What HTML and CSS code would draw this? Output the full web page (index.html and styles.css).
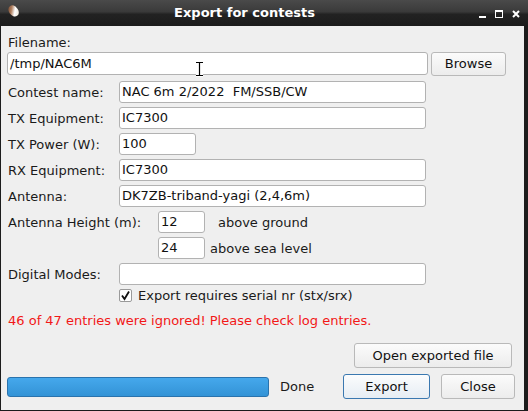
FILE: index.html
```html
<!DOCTYPE html>
<html>
<head>
<meta charset="utf-8">
<link rel="stylesheet" href="styles.css">
</head>
<body>
<div class="window">
  <div class="titlebar">
    <div class="appicon"></div>
    <div class="title">Export for contests</div>
    <div class="controls">
      <span class="ctl-min"></span>
      <span class="ctl-max"></span>
      <svg class="ctl-close" width="8" height="8" viewBox="0 0 8 8"><path d="M1 1L7 7M7 1L1 7" stroke="#fff" stroke-width="2"/></svg>
    </div>
  </div>
  <div class="content">
    <div class="label-top">Filename:</div>
    <div class="file-row">
      <div class="input file-input">/tmp/NAC6M</div>
      <div class="button browse">Browse</div>
    </div>
    <div class="form">
      <div class="row"><span class="lbl">Contest name:</span><div class="input wide">NAC 6m 2/2022&nbsp; FM/SSB/CW</div></div>
      <div class="row"><span class="lbl">TX Equipment:</span><div class="input wide">IC7300</div></div>
      <div class="row"><span class="lbl">TX Power (W):</span><div class="input narrow">100</div></div>
      <div class="row"><span class="lbl">RX Equipment:</span><div class="input wide">IC7300</div></div>
      <div class="row"><span class="lbl">Antenna:</span><div class="input wide">DK7ZB-triband-yagi (2,4,6m)</div></div>
      <div class="row"><span class="lbl lbl-long">Antenna Height (m):</span><div class="input small">12</div><span class="unit unit-ground">above ground</span></div>
      <div class="row"><span class="lbl lbl-long"></span><div class="input small">24</div><span class="unit">above sea level</span></div>
      <div class="row"><span class="lbl">Digital Modes:</span><div class="input wide"></div></div>
      <div class="row check-row"><span class="lbl"></span><span class="checkbox"><svg width="11" height="11" viewBox="0 0 11 11"><path d="M2 5.5L4.5 9L9 1.5" fill="none" stroke="#111" stroke-width="1.8"/></svg></span><span class="check-text">Export requires serial nr (stx/srx)</span></div>
    </div>
    <div class="warning">46 of 47 entries were ignored! Please check log entries.</div>
    <div class="open-row"><div class="button open">Open exported file</div></div>
    <div class="bottom-row">
      <div class="progress"></div>
      <span class="done">Done</span>
      <div class="button export">Export</div>
      <div class="button close">Close</div>
    </div>
  </div>
  <svg class="cursor" width="9" height="16" viewBox="0 0 9 16"><path d="M1 1.5H8M1 14.5H8M4.5 1.5V14.5" stroke="#fff" stroke-width="3"/><path d="M1 1.5H8M1 14.5H8M4.5 1.5V14.5" stroke="#000" stroke-width="1.2"/></svg>
</div>
</body>
</html>
```
FILE: styles.css
```css
html, body {
  margin: 0;
  padding: 0;
  background: #efefef;
}
.window {
  position: relative;
  width: 528px;
  height: 411px;
  overflow: hidden;
  font-family: "DejaVu Sans", sans-serif;
  font-size: 13px;
  color: #1a1a1a;
  display: flex;
  flex-direction: column;
}
.titlebar {
  height: 26px;
  flex: none;
  display: flex;
  align-items: center;
  background: linear-gradient(#4a4a4a 0, #3a3a3a 45%, #222 55%, #1c1c1c 100%);
  color: #fff;
}
.appicon {
  width: 9px;
  height: 12px;
  margin-left: 9px;
  margin-top: -4px;
  border-radius: 50% 50% 45% 55%;
  transform: rotate(-35deg);
  background: linear-gradient(135deg, #6a3b22 0, #b08060 35%, #fff 60%, #e8dcc8 100%);
}
.title {
  flex: 1;
  text-align: center;
  font-weight: bold;
  font-size: 13px;
  padding-right: 8px;
  margin-top: -1px;
}
.controls {
  display: flex;
  align-items: center;
  gap: 9px;
  margin-right: 8px;
  padding-top: 2px;
}
.ctl-min {
  width: 7px;
  height: 2px;
  background: #fff;
  margin-top: 5px;
}
.ctl-max {
  width: 6px;
  height: 5px;
  border: 1px solid #fff;
  border-top-width: 2px;
}
.ctl-close { display: block; }
.content {
  flex: 1;
  border-left: 1px solid #1c1c1c;
  border-right: 4px solid #1c1c1c;
  border-bottom: 1px solid #1c1c1c;
  padding: 0 0 0 6px;
  display: flex;
  flex-direction: column;
}
.label-top {
  margin-top: 8px;
  height: 18px;
  line-height: 18px;
  padding-left: 1px;
}
.file-row {
  display: flex;
  align-items: flex-start;
}
.input {
  box-sizing: border-box;
  background: #fff;
  border: 1px solid #b2b2b2;
  border-radius: 3px;
  height: 22px;
  line-height: 20px;
  padding-left: 2px;
  color: #111;
  white-space: nowrap;
}
.file-input {
  width: 421px;
  height: 23px;
  line-height: 21px;
}
.button {
  box-sizing: border-box;
  border: 1px solid #b9b9b9;
  border-radius: 3px;
  background: linear-gradient(#fbfbfb, #ececec);
  text-align: center;
  color: #111;
}
.browse {
  margin-left: 3px;
  width: 75px;
  height: 24px;
  line-height: 22px;
}
.form {
  display: flex;
  flex-direction: column;
  gap: 4px;
  margin-top: 5px;
}
.row {
  display: flex;
  align-items: center;
  height: 22px;
  white-space: nowrap;
}
.lbl {
  width: 111px;
  padding-left: 1px;
  flex: none;
}
.lbl-long { width: 150px; }
.wide { width: 307px; }
.narrow { width: 77px; }
.small { width: 47px; }
.unit { margin-left: 5px; }
.unit-ground { margin-left: 13px; }
.check-row { height: 13px; }
.checkbox {
  box-sizing: border-box;
  width: 13px;
  height: 13px;
  border: 1px solid #9a9a9a;
  border-radius: 2px;
  background: #fff;
  display: flex;
  align-items: center;
  justify-content: center;
}
.checkbox svg { display: block; }
.check-text { margin-left: 6px; }
.warning {
  color: #f21818;
  margin-top: 10px;
  padding-left: 1px;
  height: 18px;
  line-height: 18px;
}
.open-row {
  display: flex;
  justify-content: flex-end;
  margin-top: 13px;
  padding-right: 12px;
}
.open {
  width: 158px;
  height: 25px;
  line-height: 23px;
}
.bottom-row {
  display: flex;
  align-items: center;
  margin-top: 6px;
}
.progress {
  box-sizing: border-box;
  width: 262px;
  height: 20px;
  border: 1px solid #2a73ad;
  border-radius: 3px;
  background: linear-gradient(#45a8ec, #3393d6);
}
.done {
  margin-left: 11px;
  width: 63px;
}
.export {
  width: 87px;
  height: 25px;
  line-height: 23px;
  border-color: #3a78b0;
  background: linear-gradient(#fbfcfd, #e6edf3);
}
.close {
  margin-left: 11px;
  width: 74px;
  height: 25px;
  line-height: 23px;
}
.cursor {
  position: absolute;
  left: 195px;
  top: 61px;
}
```
